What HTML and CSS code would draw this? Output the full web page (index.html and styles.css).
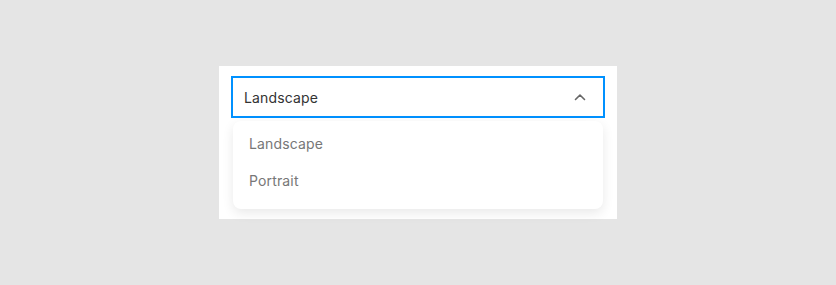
FILE: index.html
```html
<!DOCTYPE html>
<html lang="en">
<head>
<meta charset="utf-8">
<title>Select</title>
<link rel="stylesheet" href="styles.css">
</head>
<body>
<div class="stage">
  <div class="card">
    <div class="select-wrap">
      <div class="select">
        <span class="select-value">Landscape</span>
        <svg class="chevron" width="12" height="8" viewBox="0 0 12 8" aria-hidden="true">
          <path d="M1.5 6.5 L6 2 L10.5 6.5" fill="none" stroke="#666" stroke-width="1.6" stroke-linecap="round" stroke-linejoin="round"/>
        </svg>
      </div>
      <ul class="menu">
        <li class="option">Landscape</li>
        <li class="option">Portrait</li>
      </ul>
    </div>
  </div>
</div>
</body>
</html>
```
FILE: styles.css
```css
* { box-sizing: border-box; }
html, body { margin: 0; padding: 0; }
body {
  background: #e5e5e5;
  font-family: Inter, "Noto Sans", sans-serif;
  width: 836px;
  height: 285px;
}
.stage {
  height: 285px;
  display: flex;
  align-items: center;
  justify-content: center;
}
.card {
  width: 398px;
  height: 153px;
  background: #ffffff;
  padding: 10px 12px;
}
.select-wrap {
  position: relative;
}
.select {
  height: 42px;
  border: 2px solid #0091ff;
  display: flex;
  align-items: center;
  justify-content: space-between;
  padding: 0 17px 0 11px;
}
.select-value {
  font-size: 14px;
  color: #333333;
  letter-spacing: 0.15px;
}
.chevron { display: block; }
.menu {
  position: absolute;
  top: 45px;
  left: 2px;
  right: 2px;
  margin: 0;
  padding: 4px 0 10px;
  list-style: none;
  background: #ffffff;
  border-radius: 8px;
  box-shadow: 0 4px 12px rgba(0, 0, 0, 0.09);
}
.option {
  height: 37px;
  display: flex;
  align-items: center;
  padding-left: 16px;
  font-size: 14px;
  color: #777777;
  letter-spacing: 0.15px;
}
```
